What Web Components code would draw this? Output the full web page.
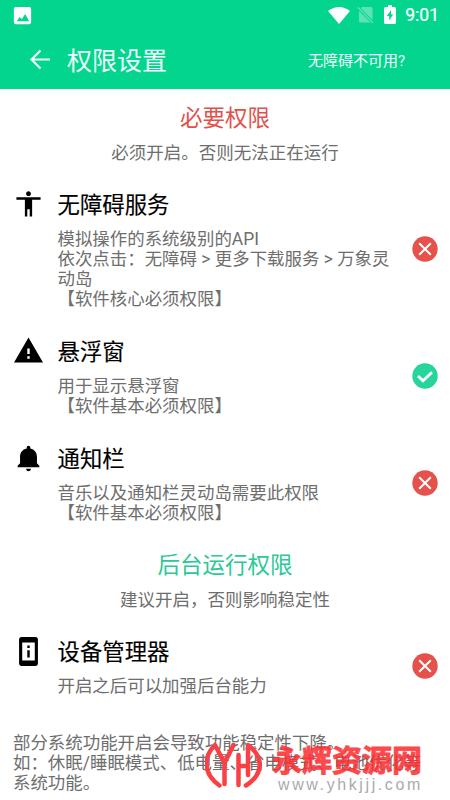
<!DOCTYPE html>
<html lang="zh-CN">
<head>
<meta charset="utf-8">
<title>权限设置</title>
<style>
html,body{margin:0;height:100%;background:#fff;overflow:hidden}
body{font-family:Roboto,"Noto Sans CJK SC",sans-serif;color:#6e6e6e}
</style>
</head>
<body>
<permission-page></permission-page>
<script>
const define = (name, html) => {
  const t = document.createElement('template');
  t.innerHTML = html;
  customElements.define(name, class extends HTMLElement {
    constructor() { super(); this.attachShadow({mode:'open'}).append(t.content.cloneNode(true)); }
  });
};

define('status-bar', `
<style>
:host{display:flex;height:30px;align-items:center;padding:0 11px 0 11px;color:#fff;font-size:17.5px;box-sizing:border-box}
svg{display:block;fill:#fff}
.gap{flex:1}
.wifi{margin-right:7px}.sim{margin-right:10px;opacity:.35}.bat{margin-right:9px;margin-top:-1px}
span{font-weight:400;line-height:30px;-webkit-text-stroke:.2px #fff}
</style>
<svg width="23" height="23" viewBox="0 0 24 24"><path d="M21 19V5c0-1.100-.9-2-2-2H5c-1.100 0-2 .9-2 2v14c0 1.100.9 2 2 2h14c1.100 0 2-.9 2-2zM6 18l3-4.500 2.300 2.500 3.500-5.500L19 18z"/></svg>
<div class="gap"></div>
<svg class="wifi" width="22" height="17" viewBox="0 0 22 17"><path d="M0 4Q11-4 22 4L11 17Z"/></svg>
<svg class="sim" width="17" height="18" viewBox="0 0 17 18"><path d="M5 1H14Q15.500 1 15.500 2.500V14L3.800 2.200ZM2 5L13.500 16.500H3.500Q2 16.500 2 15Z"/><path d="M.8 1.300L16 17" stroke="#fff" stroke-width="1.300"/></svg>
<svg class="bat" width="12" height="19" viewBox="0 0 12 19"><path fill-rule="evenodd" d="M4 0H8V2H10.500Q12 2 12 3.500V17.500Q12 19 10.500 19H1.500Q0 19 0 17.500V3.500Q0 2 1.500 2H4ZM7 5L2.800 11H5.200V15.500L9.200 9.200H7Z"/></svg>
<span>9:01</span>
`);

define('app-bar', `
<style>
:host{display:flex;height:59px;align-items:center;padding:0 45px 0 28px;color:#effff9;box-sizing:border-box}
svg{display:block;margin-right:15px}
h1{margin:5px 0 0;font-size:25px;font-weight:400;line-height:36px;flex:1}
.action{font-size:15px;line-height:22px;margin-top:2px}
</style>
<svg width="24" height="24" viewBox="0 0 24 24" fill="none" stroke="#effff9" stroke-width="2.200"><path d="M22 11.500H4M12.500 2.500L3.500 11.500L12.500 20.500"/></svg>
<h1><slot></slot></h1><div class="action"><slot name="action"></slot></div>
`);

define('section-heading', `
<style>
:host{display:block;text-align:center}
.t{font-size:22.500px;line-height:32px;color:var(--tone,#e2504a)}
.s{font-size:17.500px;line-height:26px;margin-top:6px}
</style>
<div class="t"><slot></slot></div><div class="s"><slot name="note"></slot></div>
`);

const icons = {
  person:'<path d="M12 1c1.100 0 2 .9 2 2s-.9 2-2 2-2-.9-2-2 .9-2 2-2zm10 7h-7v14h-2v-6h-2v6H9V8H2V6h20v2z"/>',
  warning:'<path d="M0 21h24L12 .5 0 21zm13-3h-2v-2h2v2zm0-4h-2v-4.500h2V14z"/>',
  bell:'<path d="M12 22.500c1.100 0 2-.9 2-2h-4c0 1.100.89 2 2 2zm7-6.500v-5.500c0-3.400-2-6-5.500-6.800V3c0-.83-.67-1.500-1.500-1.500s-1.500.67-1.500 1.500v.7C7 4.500 5 7.100 5 10.500V16l-2 2v1.200h18V18l-2-2z"/>',
  device:'<path d="M11 11h2v6h-2zM11 7h2v2h-2z"/><path fill-rule="evenodd" d="M6.200 0h11.600c1.100 0 2 .9 2 2v20c0 1.100-.9 2-2 2H6.200c-1.100 0-2-.9-2-2V2c0-1.100.9-2 2-2zM6.800 4.500v15h10.400v-15z"/>'
};

customElements.define('permission-item', class extends HTMLElement {
  connectedCallback() {
    const on = this.hasAttribute('granted');
    this.attachShadow({mode:'open'}).innerHTML = `
<style>
:host{display:grid;grid-template-columns:29px 335px 26px;column-gap:14.500px;padding:0 12px 0 14px;align-items:center}
.icon{align-self:start;width:29px;height:29px;margin-top:1px}
h2{margin:0;font-size:22.400px;line-height:32px;font-weight:400;color:#000;-webkit-text-stroke:.15px #000}
.d{font-size:17.450px;line-height:20.100px;margin-top:8px;padding-bottom:1px;text-spacing-trim:space-all}
.state{display:block;width:26px;height:26px;margin:-1px 0 0 5px}
</style>
<svg class="icon" viewBox="0 0 24 24">${icons[this.getAttribute('icon')]}</svg>
<div><h2>${this.getAttribute('label')}</h2><div class="d"><slot></slot></div></div>
<svg class="state" viewBox="0 0 26 26" fill="none" stroke="#fff"><circle cx="13" cy="13" r="12.700" stroke="none" fill="${on?'#26d59b':'#e5514b'}"/>${on
  ? '<path d="M6 13L11 17.800L20 9.200" stroke-width="2.800"/>'
  : '<path d="M7.200 7.200L18.800 18.800M18.800 7.200L7.200 18.800" stroke-width="2"/>'}</svg>`;
  }
});

define('site-mark', `
<style>
:host{display:flex;gap:10px;align-items:flex-start;color:#fb3034}
svg{display:block;margin-top:1px}
.n{font:700 30px/36px "Noto Sans CJK SC",sans-serif;white-space:nowrap;-webkit-text-stroke:.9px #fb3034;opacity:.88;margin-top:0}
.u{font:16px/18px "Liberation Sans",sans-serif;color:#aaa;letter-spacing:2.600px;margin:0 0 0 6px;white-space:nowrap}
</style>
<svg width="57" height="48" viewBox="0 0 57 48" fill="none" stroke="#f94045" stroke-width="4.500" stroke-linejoin="round" stroke-linecap="round"><path d="M14.500 44.500C-2 33 -2 16 10 4L19.500 22M28.500 4L19.500 22V43M33.500 14V44M33.500 25H43M43 34V4C59 16 59 33 41 44.500"/></svg>
<div><div class="n">永辉资源网</div><div class="u">www.yhkjjj.com</div></div>
`);

define('permission-page', `
<style>
:host{display:block;position:relative;width:450px;height:800px;background:#fff;overflow:hidden}
header{background:#03d58f;height:89px}
main{display:flex;flex-direction:column;padding-top:13px}
.h2{margin-top:25px;--tone:#2cc896}
.foot{font-size:17.450px;line-height:20.200px;margin:36px 0 0 13px;white-space:nowrap}
site-mark{position:absolute;left:205px;top:740px}
</style>
<header><status-bar></status-bar><app-bar>权限设置<span slot="action">无障碍不可用?</span></app-bar></header>
<main>
<section-heading>必要权限<span slot="note">必须开启。否则无法正在运行</span></section-heading>
<permission-item style="margin-top:23px" icon="person" label="无障碍服务">模拟操作的系统级别的API<br>依次点击：无障碍 &gt; 更多下载服务 &gt; 万象灵动岛<br>【软件核心必须权限】</permission-item>
<permission-item style="margin-top:26px" icon="warning" label="悬浮窗" granted>用于显示悬浮窗<br>【软件基本必须权限】</permission-item>
<permission-item style="margin-top:25px" icon="bell" label="通知栏">音乐以及通知栏灵动岛需要此权限<br>【软件基本必须权限】</permission-item>
<section-heading class="h2">后台运行权限<span slot="note">建议开启，否则影响稳定性</span></section-heading>
<permission-item style="margin-top:23px" icon="device" label="设备管理器">开启之后可以加强后台能力</permission-item>
<div class="foot">部分系统功能开启会导致功能稳定性下降。<br>如：休眠/睡眠模式、低电量、省电模式、电池优化等<br>系统功能。</div>
</main>
<site-mark></site-mark>
`);
</script>
</body>
</html>
